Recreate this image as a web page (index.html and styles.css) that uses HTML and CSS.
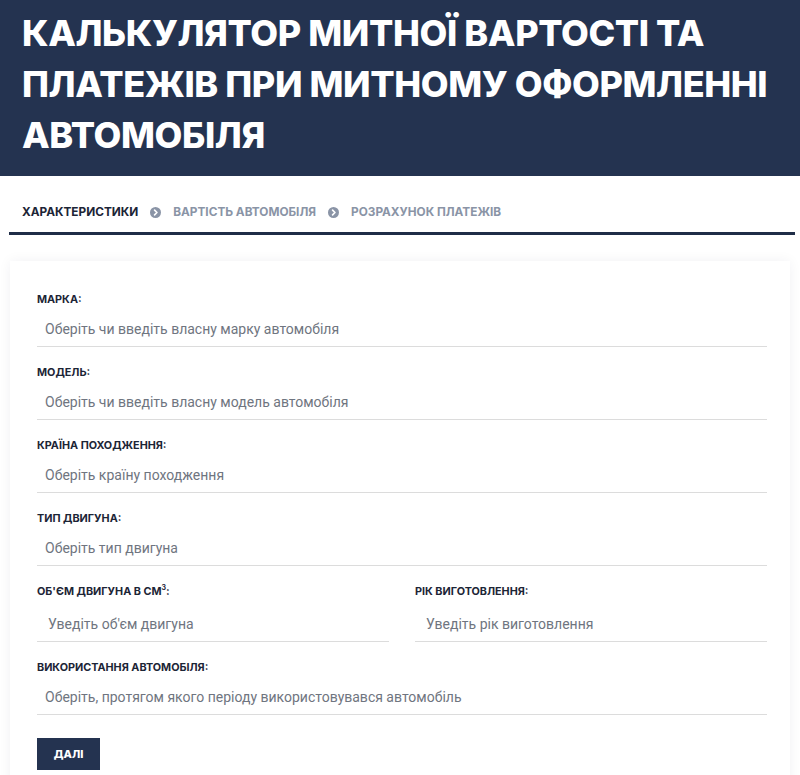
FILE: index.html
```html
<!DOCTYPE html>
<html lang="uk">
<head>
<meta charset="utf-8">
<title>Калькулятор митної вартості</title>
<link rel="stylesheet" href="styles.css">
</head>
<body>
<header class="hero">
  <h1 class="hero-title">Калькулятор митної вартості та<br>платежів при митному оформленні<br>автомобіля</h1>
</header>
<nav class="steps">
  <span class="step step-active">Характеристики</span>
  <svg class="step-icon" viewBox="0 0 12 12" aria-hidden="true"><circle cx="6" cy="6" r="6" fill="#8a94a6"/><path d="M5 3.4 L7.6 6 L5 8.6" fill="none" stroke="#fff" stroke-width="1.8" stroke-linecap="round" stroke-linejoin="round"/></svg>
  <span class="step">Вартість автомобіля</span>
  <svg class="step-icon" viewBox="0 0 12 12" aria-hidden="true"><circle cx="6" cy="6" r="6" fill="#8a94a6"/><path d="M5 3.4 L7.6 6 L5 8.6" fill="none" stroke="#fff" stroke-width="1.8" stroke-linecap="round" stroke-linejoin="round"/></svg>
  <span class="step">Розрахунок платежів</span>
</nav>
<main class="card">
  <form class="form">
    <div class="field">
      <label class="label">Марка:</label>
      <div class="input">Оберіть чи введіть власну марку автомобіля</div>
    </div>
    <div class="field">
      <label class="label">Модель:</label>
      <div class="input">Оберіть чи введіть власну модель автомобіля</div>
    </div>
    <div class="field">
      <label class="label">Країна походження:</label>
      <div class="input">Оберіть країну походження</div>
    </div>
    <div class="field">
      <label class="label">Тип двигуна:</label>
      <div class="input">Оберіть тип двигуна</div>
    </div>
    <div class="row">
      <div class="field field-wide">
        <label class="label">Об'єм двигуна в см<sup>3</sup>:</label>
        <div class="input input-pad">Уведіть об'єм двигуна</div>
      </div>
      <div class="field field-wide">
        <label class="label">Рік виготовлення:</label>
        <div class="input input-pad">Уведіть рік виготовлення</div>
      </div>
    </div>
    <div class="field">
      <label class="label">Використання автомобіля:</label>
      <div class="input">Оберіть, протягом якого періоду використовувався автомобіль</div>
    </div>
    <div class="actions">
      <button type="button" class="btn">Далі</button>
    </div>
  </form>
</main>
</body>
</html>
```

FILE: styles.css
```css
* { box-sizing: border-box; }
html, body { margin: 0; padding: 0; background: #fff; }
body { font-family: Inter, "Noto Sans", sans-serif; color: #1f2a40; }

.hero {
  background: #243350;
  height: 176px;
  padding: 8px 22px 0;
}
.hero-title {
  margin: 0;
  color: #fff;
  font-family: Inter, sans-serif;
  font-weight: 800;
  font-size: 36px;
  line-height: 51px;
  text-transform: uppercase;
  letter-spacing: -0.4px;
  white-space: nowrap;
}

.steps {
  display: flex;
  align-items: center;
  gap: 9px;
  margin: 0 5px 0 9px;
  padding: 28px 0 12px 13px;
  border-bottom: 3px solid #1f2d47;
}
.step {
  font-family: Inter, sans-serif;
  font-weight: 700;
  font-size: 11.8px;
  text-transform: uppercase;
  color: #8a94a6;
  line-height: 16px;
}
.step-active { color: #1c2536; }
.step-icon { width: 11px; height: 11px; margin: 0 3px; }

.card {
  margin: 26px 10px 0 10px;
  padding: 29px 23px 0 27px;
  background: #fff;
  box-shadow: 0 0 12px rgba(30, 40, 70, 0.06);
  min-height: 540px;
}
.form { display: flex; flex-direction: column; }
.row { display: flex; gap: 26px; }
.field { display: flex; flex-direction: column; }
.field-wide { flex: 1; }
.label {
  font-family: Inter, sans-serif;
  font-weight: 700;
  font-size: 10.8px;
  text-transform: uppercase;
  color: #1c2536;
  line-height: 14px;
  padding-top: 3px;
}
.label sup { font-size: 7px; line-height: 0; }
.input {
  font-family: Roboto, sans-serif;
  font-size: 14px;
  color: #6f7580;
  padding: 13px 8px 8px 8px;
  border-bottom: 1px solid #dcdcdc;
  margin-bottom: 16px;
  line-height: 18px;
}
.input-pad { padding: 16px 11px 8px; }
.actions { padding-top: 7px; }
.btn {
  background: #243350;
  color: #fff;
  border: 0;
  border-radius: 0;
  width: 63px;
  height: 32px;
  font-family: Inter, sans-serif;
  font-weight: 800;
  font-size: 11px;
  text-transform: uppercase;
}
```
